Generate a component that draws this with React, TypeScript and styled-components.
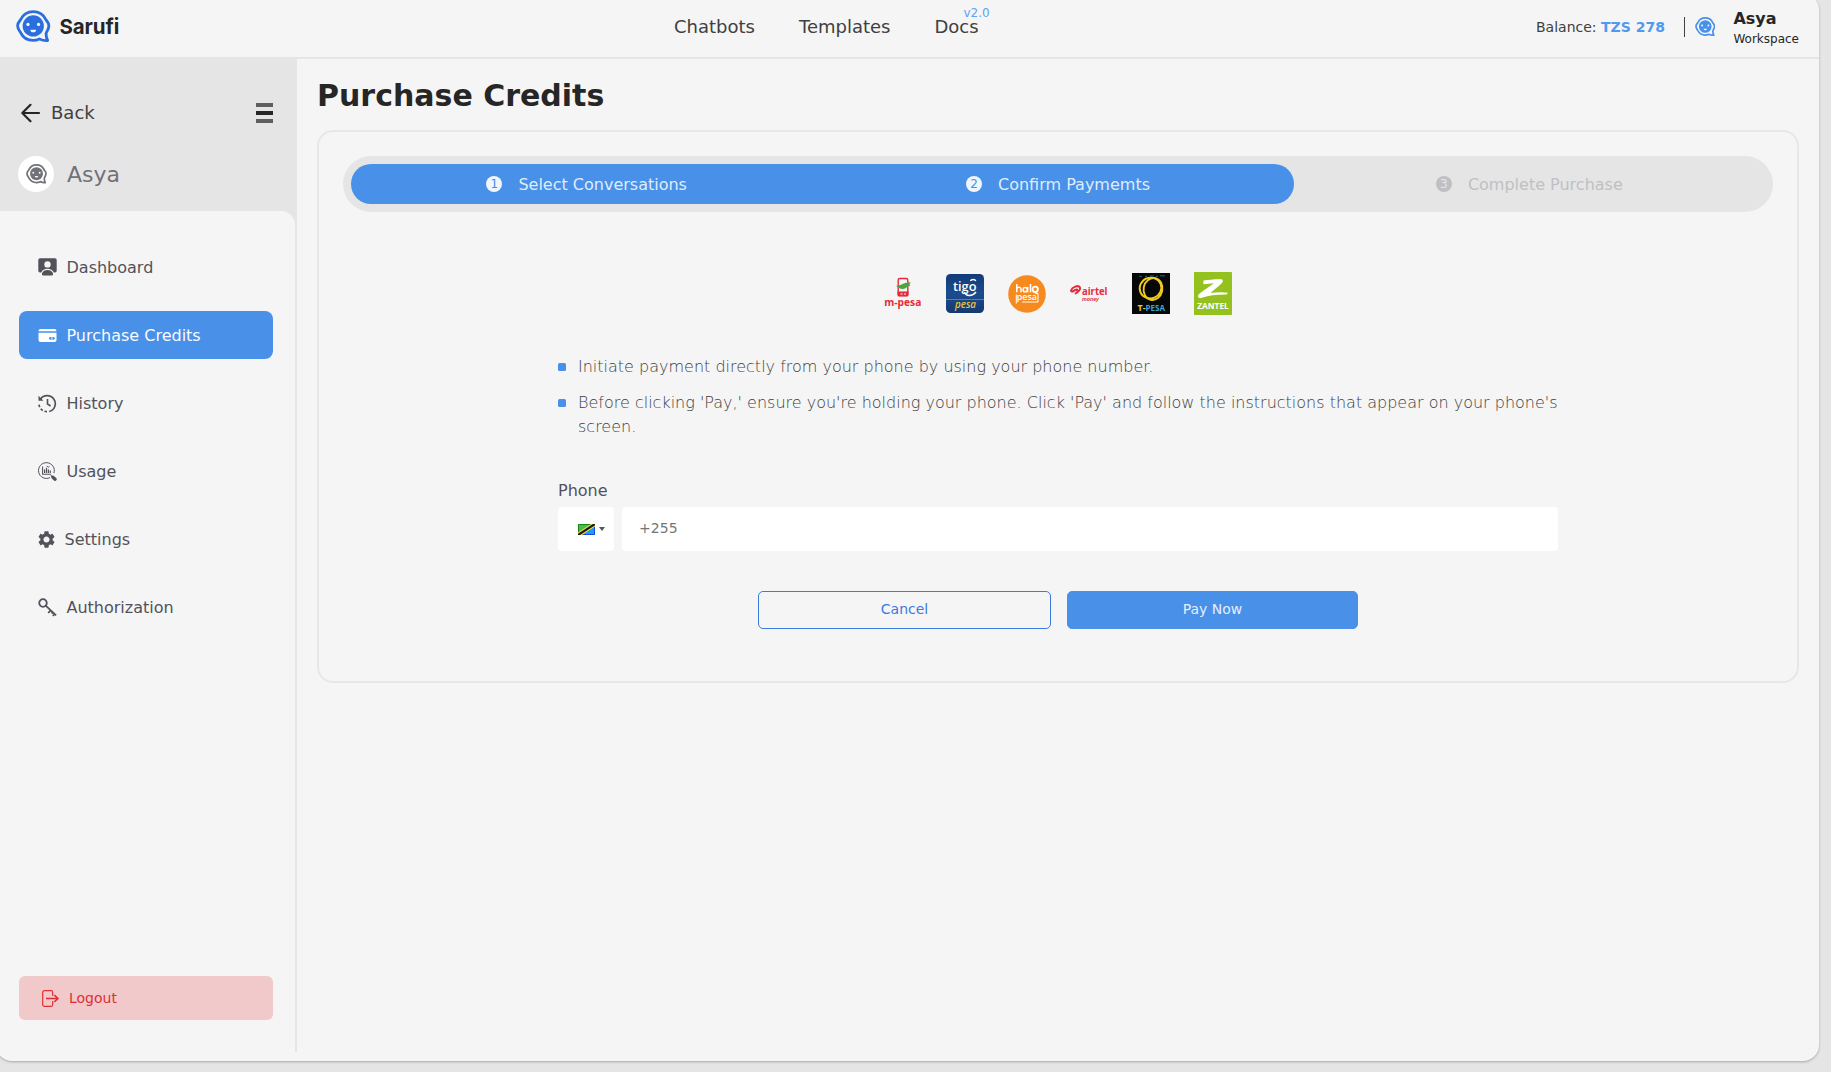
import React from "react";
import styled, { createGlobalStyle, css } from "styled-components";
import { MdSettings } from "react-icons/md";

const color = {
  page: "#e5e5e5",
  surface: "#f5f5f5",
  line: "#e5e5e5",
  blue: "#4990e9",
  deepBlue: "#2b6fdf",
  ink: "#262626",
  text: "#404040",
  muted: "#52525b",
};

const GlobalStyle = createGlobalStyle`
  * { box-sizing: border-box; }
  html, body { margin: 0; height: 100%; overflow: hidden; }
  body {
    background: ${color.page};
    color: ${color.ink};
    font-family: "DejaVu Sans", sans-serif;
    font-size: 16px;
    line-height: 1.5;
  }
  button, input { font-family: inherit; }
  svg { display: block; flex-shrink: 0; }
`;

const Shell = styled.div`
  display: flex;
  flex-direction: column;
  width: 1823px;
  height: 1067px;
  margin: -6px 0 0 -4px;
  padding: 6px 0 9px 4px;
  border-radius: 16px;
  background: ${color.surface};
  box-shadow: 0 1px 3px rgba(0, 0, 0, 0.18), 0 1px 2px rgba(0, 0, 0, 0.1);
  overflow: hidden;
`;

const Header = styled.header`
  display: flex;
  align-items: center;
  height: 59px;
  flex-shrink: 0;
  padding: 0 20px 4px 16px;
  border-bottom: 2px solid ${color.line};
`;

const Brand = styled.div`
  display: flex;
  align-items: center;
  gap: 9px;
  width: 658px;
  color: ${color.deepBlue};
`;

const BrandName = styled.span`
  padding-top: 1px;
  font-family: Inter, sans-serif;
  font-size: 20.5px;
  font-weight: 700;
  line-height: 28px;
  letter-spacing: -0.1px;
  color: ${color.ink};
`;

const TopNav = styled.nav`
  display: flex;
  gap: 44px;
  padding-top: 1px;
  font-size: 18px;
  line-height: 28px;
  color: ${color.text};
`;

const NavLink = styled.span`
  position: relative;
`;

const Version = styled.span`
  position: absolute;
  top: -7px;
  right: -11px;
  font-size: 12px;
  line-height: 14px;
  color: #5fa2f3;
`;

const Account = styled.div`
  display: flex;
  align-items: center;
  margin-left: auto;
  font-size: 14px;
`;

const Balance = styled.span`
  line-height: 20px;
  color: ${color.text};
  b { color: #4f99f0; }
`;

const Divider = styled.i`
  width: 1px;
  height: 20px;
  margin: 0 9.5px 0 19.5px;
  background: ${color.text};
`;

const Workspace = styled.div`
  display: flex;
  align-items: center;
  gap: 18px;
  color: ${color.blue};
`;

const WorkspaceText = styled.div`
  display: flex;
  flex-direction: column;
  color: ${color.ink};
  font-size: 12px;
  line-height: 16px;
  b { font-size: 16px; line-height: 24px; }
`;

const Body = styled.div`
  display: flex;
  flex: 1;
  min-height: 0;
`;

const Sidebar = styled.aside`
  display: flex;
  flex-direction: column;
  width: 297px;
  flex-shrink: 0;
  border-right: 2px solid ${color.line};
  background: ${color.line};
`;

const SidebarTop = styled.div`
  height: 152px;
  padding: 40px 22px 0 18px;
`;

const BackRow = styled.div`
  display: flex;
  align-items: center;
  height: 28px;
  font-size: 18px;
  color: ${color.text};
`;

const BackLabel = styled.span`
  margin: 0 auto 0 10px;
  padding-bottom: 1px;
`;

const Burger = styled.span`
  display: grid;
  gap: 4px;
  width: 17px;
  i { height: 4px; background: #5e5e5e; }
  i:nth-child(2) { background: ${color.ink}; }
`;

const Owner = styled.div`
  display: flex;
  align-items: center;
  gap: 13px;
  margin-top: 28px;
  font-size: 22px;
  line-height: 36px;
  color: #71717a;
`;

const OwnerName = styled.span`
  padding-top: 2px;
`;

const Avatar = styled.span`
  display: grid;
  place-items: center;
  width: 36px;
  height: 36px;
  border-radius: 50%;
  background: #fff;
`;

const Menu = styled.div`
  display: flex;
  flex-direction: column;
  flex: 1;
  gap: 20px;
  padding: 32px 22px 32px 18.500px;
  border-radius: 0 14px 0 0;
  background: ${color.surface};
`;

const MenuItem = styled.a<{ $active?: boolean }>`
  display: flex;
  align-items: center;
  gap: 9.5px;
  height: 48px;
  padding-left: 19.500px;
  border-radius: 8px;
  color: ${color.muted};
  ${(p) => p.$active && css`
    background: ${color.blue};
    color: #f8fbff;
  `}
`;

const MenuLabel = styled.span`
  padding-top: 2px;
`;

const Logout = styled.button`
  display: flex;
  align-items: center;
  gap: 10.5px;
  height: 44px;
  margin-top: auto;
  padding: 0 0 0 23px;
  border: 0;
  border-radius: 6px;
  background: #f1c9ca;
  color: #e02f33;
  font-size: 14px;
`;

const Main = styled.main`
  flex: 1;
  padding: 15px 20px 0 20px;
`;

const Title = styled.h1`
  margin: 0;
  font-size: 30px;
  line-height: 44px;
  font-weight: 700;
`;

const Card = styled.section`
  height: 553px;
  margin-top: 12px;
  padding: 24px;
  border: 2px solid #e7e7e7;
  border-radius: 16px;
`;

const Stepper = styled.div`
  display: flex;
  height: 56px;
  padding: 8px;
  border-radius: 28px;
  background: ${color.line};
`;

const StepsDone = styled.div`
  display: flex;
  flex: 2;
  border-radius: 20px;
  background: ${color.blue};
`;

const Step = styled.div<{ $done?: boolean }>`
  display: flex;
  flex: 1;
  align-items: center;
  justify-content: center;
  gap: 16px;
  color: ${(p) => (p.$done ? "#dfecfb" : "#bfc0c4")};
`;

const StepLabel = styled.span`
  padding-top: 2px;
`;

const StepNumber = styled.span<{ $done?: boolean }>`
  display: grid;
  place-items: center;
  width: 16px;
  height: 16px;
  border-radius: 50%;
  font-size: 12px;
  line-height: 16px;
  background: ${(p) => (p.$done ? "#f0f6fe" : "#bfc0c4")};
  color: ${(p) => (p.$done ? color.blue : color.line)};
`;

const Payment = styled.div`
  width: 1000px;
  margin: 60px auto 0;
`;

const Providers = styled.div`
  display: flex;
  align-items: center;
  justify-content: center;
  gap: 24px;
  height: 43px;
`;

const Notes = styled.ul`
  display: grid;
  gap: 12px;
  margin: 40px 0 0;
  padding: 0;
  list-style: none;
  font-weight: 300;
  color: #404040;
`;

const Note = styled.li`
  display: flex;
  gap: 12px;
  &::before {
    content: "";
    flex-shrink: 0;
    width: 8px;
    height: 8px;
    margin-top: 8px;
    border-radius: 1.5px;
    background: ${color.blue};
  }
`;

const Label = styled.label`
  display: block;
  margin-top: 40px;
  line-height: 24px;
  color: ${color.muted};
`;

const PhoneRow = styled.div`
  display: flex;
  gap: 8px;
  height: 44px;
  margin-top: 4px;
`;

const Country = styled.span`
  display: flex;
  align-items: center;
  gap: 4px;
  width: 56px;
  padding-left: 19.5px;
  border-radius: 4px;
  background: #fff;
`;

const Caret = styled.i`
  border: 3px solid transparent;
  border-top: 4px solid #555;
  border-bottom: 0;
`;

const PhoneInput = styled.input`
  flex: 1;
  padding: 0 17px 2px;
  border: 0;
  border-radius: 4px;
  background: #fff;
  font-size: 14px;
  letter-spacing: 0.1px;
  &::placeholder { color: #757575; opacity: 1; }
`;

const Actions = styled.div`
  display: grid;
  grid-template-columns: 293px 291px;
  justify-content: center;
  gap: 16px;
  margin-top: 40px;
`;

const ActionButton = styled.button<{ $primary?: boolean }>`
  height: 38px;
  padding: 0 0 2px;
  border: 1px solid ${(p) => (p.$primary ? color.blue : "#3b7be0")};
  border-radius: 5px;
  background: ${(p) => (p.$primary ? color.blue : "transparent")};
  color: ${(p) => (p.$primary ? "#e4effc" : "#3b7be0")};
  font-size: 14px;
`;

function BotMark({ width }: { width: number }) {
  return (
    <svg width={width} height={(width * 32) / 34} viewBox="0 0 34 32">
      <path
        d="M17 1.6C11.500 1.600 6.900 4.700 4.700 9.300 4 10.700 1.600 12.200 1.600 15.500S3.600 20.600 4.400 22C6.700 26.800 11.500 30 17 30c2.300 0 4.200-.5 6-1.400 2.500 1.100 5.300 1.900 8.200 1.500-1-1.800-1.500-4-1.600-6.700.3-2 2.800-4.300 2.800-7.900 0-3.300-2.400-4.800-3.100-6.200C27.100 4.700 22.500 1.600 17 1.600Z"
        fill="none" stroke="currentColor" strokeWidth="2.800" strokeLinejoin="round"
      />
      <circle cx="17" cy="15.700" r="10.500" fill="currentColor" />
      <circle cx="11.800" cy="14.200" r="1.600" fill="#f4f8ff" />
      <circle cx="22.200" cy="14.200" r="1.600" fill="#f4f8ff" />
      <path d="M14.200 19.500h5.600a2.800 2.500 0 0 1-5.600 0Z" fill="#f4f8ff" />
    </svg>
  );
}

const ArrowIcon = () => (
  <svg width="23" height="22" viewBox="0 0 23 22" fill="none" stroke={color.ink} strokeWidth="2.200" strokeLinecap="round" strokeLinejoin="round">
    <path d="M21 11H4.500M12.500 2.800 4.300 11l8.200 8.200" />
  </svg>
);

const DashboardIcon = () => (
  <svg width="19" height="19" viewBox="0 0 19 19" fill="currentColor">
    <path fillRule="evenodd" d="M2 .2h15A1.700 1.700 0 0 1 18.700 1.900v10.900a1.700 1.700 0 0 1-1.700 1.700h-1.200C14.700 12 12.300 10.800 9.500 10.800S4.300 12 3.200 14.500H2A1.700 1.700 0 0 1 .3 12.800V1.900A1.700 1.700 0 0 1 2 .2Zm7.500 3a3.200 3.200 0 1 0 0 6.400 3.200 3.200 0 0 0 0-6.400Z" />
    <path d="M4 15.300c.8-2.200 3-3.400 5.500-3.400s4.700 1.200 5.500 3.400v1a1.200 1.200 0 0 1-1.200 1.200H5.200A1.200 1.200 0 0 1 4 16.300Z" />
  </svg>
);

const CardIcon = () => (
  <svg width="19" height="19" viewBox="0 0 19 19">
    <path d="M.5 5.200V5a2 2 0 0 1 2-2h14a2 2 0 0 1 2 2v.2ZM.5 6.700h18v7.300a2 2 0 0 1-2 2h-14a2 2 0 0 1-2-2Z" fill="#fff" />
    <rect x="11" y="10.900" width="5.700" height="2.800" rx="1.400" fill={color.blue} />
    <path d="M13.900 10.900v2.800" stroke="#fff" strokeWidth=".9" />
  </svg>
);

const HistoryIcon = () => (
  <svg width="19" height="19" viewBox="0 0 19 19" fill="none" stroke="currentColor" strokeWidth="1.700">
    <path d="M2.400 5.200A8.100 8.100 0 1 1 11.200 17.500" />
    <path d="M9 17.700a8 8 0 0 1-8-8.200" strokeDasharray="2.600 1.900" />
    <path d="M9.500 5v5l3.100 2" strokeWidth="1.600" />
    <path d="M.5 1.800v4.900h4.900Z" fill="currentColor" stroke="none" />
  </svg>
);

const UsageIcon = () => (
  <svg width="19" height="19" viewBox="0 0 19 19" fill="none" stroke="currentColor">
    <path d="M15.900 11.100A7.900 7.900 0 1 0 12 15.600" strokeWidth="1" />
    <path d="M4.600 4.500v7.700h8.300" strokeWidth="1.100" />
    <path d="M6.600 11V7.400M8.500 11V5.800M10.400 11V7.400M12.300 11V8.600" strokeWidth="1.200" />
    <path d="m8.700 3.800 1.500 1.500 1.200-1" strokeWidth="1" />
    <path d="m12.800 13.400 1.600 1.500" strokeWidth="1.300" />
    <path d="m14.900 15.200 2.200 2" strokeWidth="3.200" strokeLinecap="round" />
  </svg>
);

const KeyIcon = () => (
  <svg width="19" height="19" viewBox="0 0 19 19" fill="none" stroke="currentColor" strokeWidth="1.800">
    <circle cx="5" cy="5" r="3.800" />
    <path d="m7.700 7.700 10.400 9.600M12.800 12.300l-2.600 2.600M14.900 14.200l-1.300 1.300M16.700 16l-1.900 2" />
  </svg>
);

const LogoutIcon = () => (
  <svg width="17" height="17" viewBox="0 0 17 17" fill="none" stroke="currentColor" strokeWidth="1.200">
    <path d="M10.700 6V2.300A1.600 1.600 0 0 0 9.100.7H2.300A1.600 1.600 0 0 0 .7 2.300v12.400a1.600 1.600 0 0 0 1.600 1.600h6.800a1.600 1.600 0 0 0 1.600-1.600V11" />
    <path d="M4 8.500h11.500M12.400 5.100l3.500 3.400-3.500 3.400" strokeWidth="1.500" />
  </svg>
);

const MPesa = () => (
  <svg width="38" height="43" viewBox="0 0 38 43" fontFamily="Open Sans" fontWeight="700">
    <rect x="14.200" y="6.500" width="9.600" height="17" rx="1.500" fill="none" stroke="#e52b3b" strokeWidth="1.400" />
    <path d="M13.500 19.500h11V23a1.500 1.500 0 0 1-1.500 1.500h-8a1.500 1.500 0 0 1-1.500-1.500Z" fill="#e52b3b" />
    <path d="M16.500 22h2M20 22h2" stroke="#fff" strokeWidth="1" />
    <path d="M11.500 13.500c3 .8 5-.8 7.500-1.800 2.500-1 5-1.500 8-1.200l-1.600 1.800 1 1.200c-3 .5-4.200 3.200-7.500 3.500-2.900.2-4.700-1.600-7.400-3.500Z" fill="#4ba342" />
    <text x=".3" y="34" fontSize="11" textLength="37" lengthAdjust="spacingAndGlyphs" fill="#e52b3b">m-pesa</text>
  </svg>
);

const TigoPesa = () => (
  <svg width="38" height="39" viewBox="0 0 38 39" fontFamily="Open Sans">
    <defs>
      <linearGradient id="tigo" x2="0" y2="1">
        <stop stopColor="#123b78" />
        <stop offset=".5" stopColor="#1c4c8f" />
        <stop offset="1" stopColor="#15396f" />
      </linearGradient>
    </defs>
    <rect width="38" height="39" rx="4.500" fill="url(#tigo)" />
    <path d="M0 25.500h38" stroke="#8b8b63" strokeWidth=".8" />
    <text x="7" y="16.500" fontSize="12.500" fontWeight="600" textLength="23.500" lengthAdjust="spacingAndGlyphs" fill="#fff">tigo</text>
    <path d="M24.500 7c.6-2 4.600-2 5.300 0M18.500 18c1.500 4.500 7.500 5 11.500 0" fill="none" stroke="#fff" strokeWidth="1.400" />
    <text x="9" y="34" fontSize="10.500" fontWeight="600" fontStyle="italic" textLength="21" lengthAdjust="spacingAndGlyphs" fill="#edc438">pesa</text>
  </svg>
);

const HaloPesa = () => (
  <svg width="38" height="38" viewBox="0 0 38 38" fontFamily="Open Sans">
    <circle cx="19" cy="19" r="18.800" fill="#f68a1e" />
    <g fill="none" stroke="#fff" strokeWidth="1.500">
      <path d="M8.800 9v8.300M8.800 13.800c.6-2.200 4.200-2 4.200.3v3.200M22.500 9v8.300" />
      <circle cx="17.200" cy="14.700" r="2.100" />
      <path d="M19.600 12v5.300" />
      <circle cx="27.200" cy="14.300" r="2.700" strokeWidth="1.800" />
      <path d="M8.300 28.500V19.500M27 18.300h3V27H14" strokeWidth="1" />
    </g>
    <text x="8.800" y="25" fontSize="9" fontWeight="600" textLength="20" lengthAdjust="spacingAndGlyphs" fill="#fff">pesa</text>
  </svg>
);

const Airtel = () => (
  <svg width="38" height="38" viewBox="0 0 38 38" fontFamily="Open Sans">
    <path d="M1 15.500c1.200-3.500 7.300-5.700 8.800-3.300 1.200 2.200-2 5.200-4.100 6.200M1.100 15.600c.4 2.200 2.700.2 4.100-.7 1.200-.8 2.400-.4 1.900.8" fill="none" stroke="#e52b3b" strokeWidth="2" strokeLinecap="round" />
    <text x="12" y="20" fontSize="11" fontWeight="700" textLength="25.500" lengthAdjust="spacingAndGlyphs" fill="#e52b3b">airtel</text>
    <text x="12" y="25.500" fontSize="5.500" fontFamily="Liberation Sans" fontWeight="700" fontStyle="italic" textLength="17" lengthAdjust="spacingAndGlyphs" fill="#e52b3b">money</text>
  </svg>
);

const TPesa = () => (
  <svg width="38" height="41" viewBox="0 0 38 41" fontFamily="Open Sans" fontWeight="700" fontSize="8.500">
    <rect width="38" height="41" fill="#060709" />
    <path d="M7 3.300h3M13 3.300h2M18 3h4M24 3.300h2M28 2.800h5" stroke="#19749b" strokeWidth=".9" />
    <g fill="none" stroke="#efcb22" strokeWidth="1.900">
      <ellipse cx="18.500" cy="15" rx="10.900" ry="10.300" transform="rotate(-22 18.500 15)" />
      <ellipse cx="21" cy="16" rx="9.400" ry="11" transform="rotate(12 21 16)" />
    </g>
    <text x="5.500" y="38.300" textLength="8" lengthAdjust="spacingAndGlyphs" fill="#efcb22">T-</text>
    <text x="13.500" y="38.300" textLength="19.500" lengthAdjust="spacingAndGlyphs" fill="#35a9df">PESA</text>
  </svg>
);

const Zantel = () => (
  <svg width="38" height="43" viewBox="0 0 38 43" fontFamily="Open Sans" fontWeight="700">
    <rect width="38" height="43" rx=".8" fill="#95c11f" />
    <path d="M9.500 8.500c6-.8 12-1.600 18.500-1.300 1.500 1.500.8 3-.8 4.600-3.500 3.400-7.500 6-10.700 9.200 5.500-.9 11.500-1.200 17.500-.3l-1.500 1.800c-9.500-.1-17.500.9-26.500 3.800-3-1.300-2-3.300-.2-4.800 4.500-3.800 9.700-7 14.200-10.300-3.500.2-7 .8-10.700 1Z" fill="#fff" />
    <text x="3.300" y="37" fontSize="8" textLength="31.500" lengthAdjust="spacingAndGlyphs" fill="#fff">ZANTEL</text>
  </svg>
);

const Flag = () => (
  <svg width="17" height="11" viewBox="0 0 17 11">
    <path d="M0 0h17L0 11Z" fill="#4fb84f" />
    <path d="M17 0v11H0Z" fill="#209cee" />
    <path d="M.5 11V.5H15" fill="none" stroke="#128717" />
    <path d="M2 10.500h14.500V1" fill="none" stroke="#1745df" />
    <path d="M0 11 17 0" stroke="#f0dc42" strokeWidth="4.400" />
    <path d="M0 11 17 0" stroke="#171717" strokeWidth="2.200" />
  </svg>
);

const menu = [
  { label: "Dashboard", icon: <DashboardIcon /> },
  { label: "Purchase Credits", icon: <CardIcon />, active: true },
  { label: "History", icon: <HistoryIcon /> },
  { label: "Usage", icon: <UsageIcon /> },
  { label: "Settings", icon: <MdSettings size={17} viewBox="2 2 20 20" /> },
  { label: "Authorization", icon: <KeyIcon /> },
];

export default function App() {
  return (
    <>
      <GlobalStyle />
      <Shell>
        <Header>
          <Brand>
            <BotMark width={34.5} />
            <BrandName>Sarufi</BrandName>
          </Brand>
          <TopNav>
            <NavLink>Chatbots</NavLink>
            <NavLink>Templates</NavLink>
            <NavLink>Docs<Version>v2.0</Version></NavLink>
          </TopNav>
          <Account>
            <Balance>Balance: <b>TZS 278</b></Balance>
            <Divider />
            <Workspace>
              <BotMark width={20.5} />
              <WorkspaceText><b>Asya</b>Workspace</WorkspaceText>
            </Workspace>
          </Account>
        </Header>
        <Body>
          <Sidebar>
            <SidebarTop>
              <BackRow>
                <ArrowIcon />
                <BackLabel>Back</BackLabel>
                <Burger><i /><i /><i /></Burger>
              </BackRow>
              <Owner>
                <Avatar><BotMark width={21} /></Avatar>
                <OwnerName>Asya</OwnerName>
              </Owner>
            </SidebarTop>
            <Menu>
              {menu.map((item) => (
                <MenuItem key={item.label} $active={item.active}>
                  {item.icon}
                  <MenuLabel>{item.label}</MenuLabel>
                </MenuItem>
              ))}
              <Logout><LogoutIcon />Logout</Logout>
            </Menu>
          </Sidebar>
          <Main>
            <Title>Purchase Credits</Title>
            <Card>
              <Stepper>
                <StepsDone>
                  <Step $done><StepNumber $done>1</StepNumber><StepLabel>Select Conversations</StepLabel></Step>
                  <Step $done><StepNumber $done>2</StepNumber><StepLabel>Confirm Paymemts</StepLabel></Step>
                </StepsDone>
                <Step><StepNumber>3</StepNumber><StepLabel>Complete Purchase</StepLabel></Step>
              </Stepper>
              <Payment>
                <Providers>
                  <MPesa /><TigoPesa /><HaloPesa /><Airtel /><TPesa /><Zantel />
                </Providers>
                <Notes>
                  <Note>Initiate payment directly from your phone by using your phone number.</Note>
                  <Note>
                    Before clicking 'Pay,' ensure you're holding your phone. Click 'Pay' and follow the
                    instructions that appear on your phone's screen.
                  </Note>
                </Notes>
                <Label htmlFor="phone">Phone</Label>
                <PhoneRow>
                  <Country><Flag /><Caret /></Country>
                  <PhoneInput id="phone" placeholder="+255" />
                </PhoneRow>
                <Actions>
                  <ActionButton>Cancel</ActionButton>
                  <ActionButton $primary>Pay Now</ActionButton>
                </Actions>
              </Payment>
            </Card>
          </Main>
        </Body>
      </Shell>
    </>
  );
}
